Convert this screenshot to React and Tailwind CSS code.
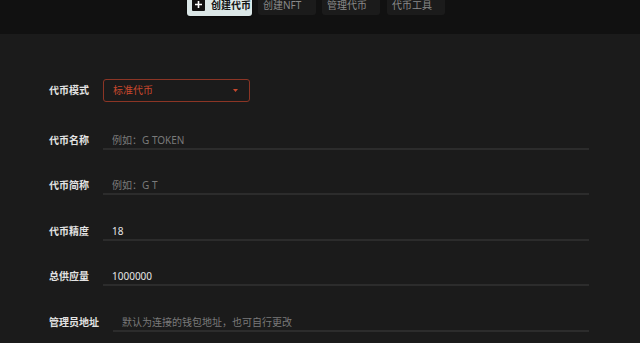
import React from 'react';

const tabs = ['创建NFT', '管理代币', '代币工具'];

const fields = [
  { label: '代币名称', placeholder: '例如：G TOKEN', value: '' },
  { label: '代币简称', placeholder: '例如：G T', value: '' },
  { label: '代币精度', placeholder: '', value: '18' },
  { label: '总供应量', placeholder: '', value: '1000000' },
  { label: '管理员地址', placeholder: '默认为连接的钱包地址，也可自行更改', value: '' },
];

// --- Campo de texto com sublinhado ---
const Field = ({ label, placeholder, value }) => (
  <div className="flex items-start">
    <div className="h-[18px] leading-[16px] text-[10px] text-[#e2e2e2] font-semibold pr-[14px] whitespace-nowrap">{label}</div>
    <input
      readOnly
      value={value}
      placeholder={placeholder}
      className="flex-1 h-[18px] border-b-2 border-[#2c2c2c] bg-transparent pl-[9px] text-[10px] leading-[16px] text-[#e6e6e6] placeholder:text-[#7a7a7a] outline-none"
    />
  </div>
);

const App = () => {
  return (
    <div className="min-h-screen bg-[#1b1b1b] overflow-hidden" style={{ fontFamily: '"Noto Sans", "Noto Sans CJK SC", sans-serif' }}>
      <header className="h-[34px] bg-[#111111] flex justify-center pr-[8px]">
        <div className="flex items-start gap-[6px]">
          <div className="-mt-[7px] h-[23px] w-[65px] bg-[#dbe7e7] rounded-[3px] flex items-center pl-[5px] gap-[6px] shadow-[0_1px_2px_rgba(0,0,0,0.5)]">
            <span className="w-[13px] h-[13px] bg-[#111] rounded-[1px] flex items-center justify-center">
              <svg width="9" height="9" viewBox="0 0 9 9">
                <path d="M4.5 1v7M1 4.5h7" stroke="#fff" strokeWidth="1.6" />
              </svg>
            </span>
            <span className="text-[10px] font-bold text-[#121212] leading-none">创建代币</span>
          </div>
          {tabs.map((t, i) => (
            <div
              key={t}
              className={`-mt-[6px] h-[21px] w-[58px] bg-[#1b1b1b] rounded-[3px] flex items-center pl-[5px] text-[10px] text-[#8a8a8a] leading-none ${i === 2 ? 'ml-[1px]' : ''}`}
            >
              {t}
            </div>
          ))}
        </div>
      </header>

      <div className="pl-[49px] pr-[51px] pt-[45px] flex flex-col gap-[27.5px]">
        <div className="flex items-center mb-[2px]">
          <div className="text-[10px] text-[#e2e2e2] font-semibold pr-[14px] leading-[16px] -mt-[2px]">代币模式</div>
          <div className="w-[147px] h-[23px] border border-[#8c3525] rounded-[3px] flex items-center justify-between pl-[9px] pr-[11px]">
            <span className="text-[10px] text-[#c8482d]">标准代币</span>
            <svg width="5" height="3" viewBox="0 0 5 3">
              <path d="M0 0h5L2.5 3z" fill="#c8482d" />
            </svg>
          </div>
        </div>
        {fields.map(f => (
          <Field key={f.label} {...f} />
        ))}
      </div>
    </div>
  );
};

export default App;
